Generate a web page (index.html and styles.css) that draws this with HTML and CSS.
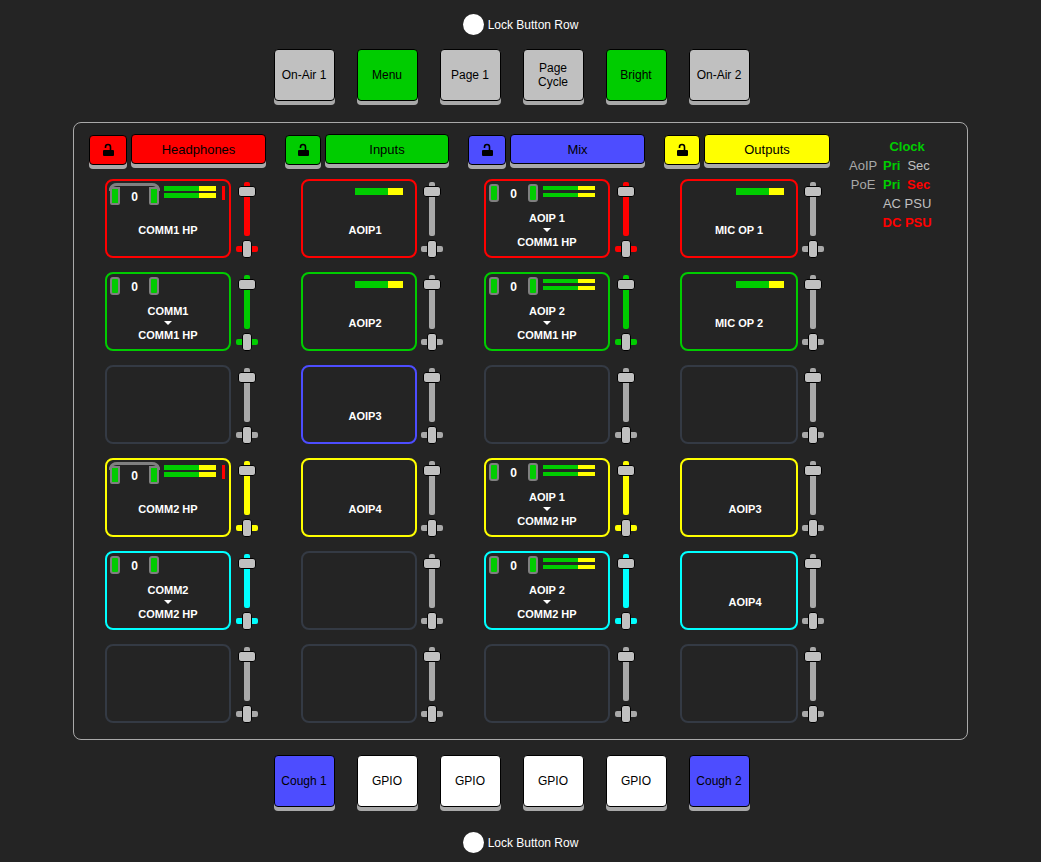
FILE: index.html
```
<!DOCTYPE html>
<html lang="en">
<head>
    <meta charset="UTF-8">
    <meta name="viewport" content="width=device-width, initial-scale=1.0">
    <title>Commentary Panel</title>
    <link rel="stylesheet" href="styles.css">
</head>
<body>
    <label class="lock-row"><input type="checkbox" class="lock-check"> Lock Button Row</label>

    <div class="button-row">
        <button class="key">On-Air 1</button>
        <button class="key green">Menu</button>
        <button class="key">Page 1</button>
        <button class="key">Page Cycle</button>
        <button class="key green">Bright</button>
        <button class="key">On-Air 2</button>
    </div>

    <main class="panel">
        <section class="column" id="headphones">
            <div class="column-head">
                <button class="lock red" aria-label="Lock headphones"><svg viewBox="0 0 12 14"><path d="M3.500 5V4a2.500 2.500 0 0 1 5 0V7" fill="none" stroke="#000" stroke-width="1.600"/><rect x="1" y="7" width="11" height="6" rx="1"/></svg></button>
                <button class="title red">Headphones</button>
            </div>
        </section>
        <section class="column narrow" id="inputs">
            <div class="column-head">
                <button class="lock green" aria-label="Lock inputs"><svg viewBox="0 0 12 14"><path d="M3.500 5V4a2.500 2.500 0 0 1 5 0V7" fill="none" stroke="#000" stroke-width="1.600"/><rect x="1" y="7" width="11" height="6" rx="1"/></svg></button>
                <button class="title green">Inputs</button>
            </div>
        </section>
        <section class="column" id="mix">
            <div class="column-head">
                <button class="lock blue" aria-label="Lock mix"><svg viewBox="0 0 12 14"><path d="M3.500 5V4a2.500 2.500 0 0 1 5 0V7" fill="none" stroke="#000" stroke-width="1.600"/><rect x="1" y="7" width="11" height="6" rx="1"/></svg></button>
                <button class="title blue">Mix</button>
            </div>
        </section>
        <section class="column narrow" id="outputs">
            <div class="column-head">
                <button class="lock yellow" aria-label="Lock outputs"><svg viewBox="0 0 12 14"><path d="M3.500 5V4a2.500 2.500 0 0 1 5 0V7" fill="none" stroke="#000" stroke-width="1.600"/><rect x="1" y="7" width="11" height="6" rx="1"/></svg></button>
                <button class="title yellow">Outputs</button>
            </div>
        </section>
        <table class="status">
            <tr><th></th><td class="ok" colspan="2">Clock</td></tr>
            <tr><th>AoIP</th><td class="ok">Pri</td><td>Sec</td></tr>
            <tr><th>PoE</th><td class="ok">Pri</td><td class="fail">Sec</td></tr>
            <tr><th></th><td colspan="2">AC PSU</td></tr>
            <tr><th></th><td class="fail" colspan="2">DC PSU</td></tr>
        </table>
    </main>

    <div class="button-row">
        <button class="key blue">Cough 1</button>
        <button class="key white">GPIO</button>
        <button class="key white">GPIO</button>
        <button class="key white">GPIO</button>
        <button class="key white">GPIO</button>
        <button class="key blue">Cough 2</button>
    </div>

    <label class="lock-row bottom"><input type="checkbox" class="lock-check"> Lock Button Row</label>

    <script>
        // color: card border, live: fader takes the card colour
        const strips = {
            headphones: [
                { color: 'red', live: true, ears: 'band', meter: 'stereo', clip: true, names: ['COMM1 HP'] },
                { color: 'green', live: true, ears: 'plain', names: ['COMM1', 'COMM1 HP'] },
                {},
                { color: 'yellow', live: true, ears: 'band', meter: 'stereo', clip: true, names: ['COMM2 HP'] },
                { color: 'cyan', live: true, ears: 'plain', names: ['COMM2', 'COMM2 HP'] },
                {}
            ],
            inputs: [
                { color: 'red', meter: 'mono', names: ['AOIP1'], shift: true },
                { color: 'green', meter: 'mono', names: ['AOIP2'], shift: true },
                { color: 'blue', names: ['AOIP3'], shift: true },
                { color: 'yellow', names: ['AOIP4'], shift: true },
                {},
                {}
            ],
            mix: [
                { color: 'red', live: true, ears: 'plain', meter: 'stereo thin', names: ['AOIP 1', 'COMM1 HP'] },
                { color: 'green', live: true, ears: 'plain', meter: 'stereo thin', names: ['AOIP 2', 'COMM1 HP'] },
                {},
                { color: 'yellow', live: true, ears: 'plain', meter: 'stereo thin', names: ['AOIP 1', 'COMM2 HP'] },
                { color: 'cyan', live: true, ears: 'plain', meter: 'stereo thin', names: ['AOIP 2', 'COMM2 HP'] },
                {}
            ],
            outputs: [
                { color: 'red', meter: 'mono', names: ['MIC OP 1'] },
                { color: 'green', meter: 'mono', names: ['MIC OP 2'] },
                {},
                { color: 'yellow', names: ['AOIP3'], shift: true },
                { color: 'cyan', names: ['AOIP4'], shift: true },
                {}
            ]
        };

        const band = '<svg class="headband" viewBox="0 0 51 8"><path d="M1.500 8V6Q3 1.500 8 1.500H43Q48 1.500 49.500 6V8" fill="none" stroke="#808080" stroke-width="3"/></svg>';

        function renderStrip(s, id, i) {
            let ears = s.ears ? `<div class="ears ${s.ears}">${s.ears === 'band' ? band : ''}<i></i><b>0</b><i></i></div>` : '';
            let meter = s.meter ? `<div class="meter ${s.meter}"><i></i>${s.meter === 'mono' ? '' : '<i></i>'}</div>` : '';
            let clip = s.clip ? '<div class="clip"></div>' : '';
            let names = (s.names || []).map(n => `<span>${n}</span>`).join('<span class="arrow"></span>');
            return `
                <div class="strip ${s.color || 'off'} ${s.live ? 'live' : ''}">
                    <div class="card">
                        <div class="card-top">${ears}${meter}${clip}</div>
                        <div class="names ${s.shift ? 'shift' : ''}">${names}</div>
                    </div>
                    <div class="controls">
                        <input type="range" class="fader" min="0" max="100" value="90" aria-label="${id} ${i + 1} level">
                        <input type="range" class="pan" min="0" max="100" value="50" aria-label="${id} ${i + 1} pan">
                    </div>
                </div>`;
        }

        for (let id in strips) {
            document.getElementById(id).insertAdjacentHTML('beforeend',
                strips[id].map((s, i) => renderStrip(s, id, i)).join(''));
        }
    </script>
</body>
</html>
```
FILE: styles.css
```
* {
    box-sizing: border-box;
}
body {
    margin: 0;
    padding: 14px 0 9px;
    background: #242424;
    color: #fff;
    font-family: "Liberation Sans", Arial, sans-serif;
    font-size: 12px;
}
button {
    font-family: inherit;
    color: #000;
    border: 1px solid #000;
    border-radius: 4px;
    box-shadow: 0 4px 0 #a9a9a9;
    cursor: pointer;
}

/* lock rows */
.lock-row {
    display: flex;
    justify-content: center;
    align-items: center;
    gap: 4px;
    height: 21px;
}
.lock-row.bottom {
    margin-top: 25px;
}
.lock-check {
    appearance: none;
    width: 21px;
    height: 21px;
    margin: 0;
    border-radius: 50%;
    background: #fff;
}
.lock-check:checked {
    background: #00cc00;
}

/* button rows */
.button-row {
    display: flex;
    justify-content: center;
    gap: 22px;
    margin-top: 14px;
    padding-right: 18px;
}
.key {
    width: 61px;
    height: 52px;
    padding: 0 4px;
    font-size: 12px;
    line-height: 14px;
    background: #c0c0c0;
}
button.red { background: #ff0000; }
button.green { background: #00cc00; }
button.blue { background: #4d4dff; }
button.yellow { background: #ffff00; }
button.white { background: #fff; }

/* main panel */
.panel {
    display: grid;
    grid-template-columns: 177fr 164fr 177fr 166fr 84px;
    column-gap: 19px;
    align-items: start;
    margin: 21px 73px 0;
    padding: 11px 34px 16px 15px;
    border: 1px solid #a9a9a9;
    border-radius: 8px;
}
.panel + .button-row {
    margin-top: 15px;
}
.column {
    display: flex;
    flex-direction: column;
    gap: 14px;
}
.column-head {
    display: flex;
    gap: 4px;
    height: 31px;
}
.lock {
    width: 38px;
    height: 30px;
    margin-top: 1px;
    padding: 0;
}
.narrow .lock {
    width: 36px;
}
.lock svg {
    display: block;
    width: 12px;
    height: 14px;
    margin: 0 auto;
}
.title {
    flex: 1;
    height: 30px;
    font-size: 13px;
}

/* strips */
.strip {
    --color: #343a44;
    --track: #a9a9a9;
    display: flex;
    gap: 5px;
    padding: 0 8px 0 16px;
}
.narrow .strip {
    gap: 4px;
    padding-right: 6px;
}
.strip.red { --color: #ff0000; }
.strip.green { --color: #00cc00; }
.strip.blue { --color: #4d4dff; }
.strip.yellow { --color: #ffff00; }
.strip.cyan { --color: #00ffff; }
.strip.live { --track: var(--color); }

.card {
    flex: 1;
    height: 79px;
    border: 2px solid var(--color);
    border-radius: 8px;
}
.card-top {
    display: flex;
    height: 31px;
    padding-left: 3px;
}
.ears {
    display: flex;
    justify-content: space-between;
    position: relative;
    width: 49px;
    height: 18px;
    margin: 3px 5px 0 0;
    line-height: 21px;
}
.ears i {
    width: 10px;
    height: 18px;
    background: #00cc00;
    border: 2px solid #808080;
    border-radius: 3px;
}
.ears.band {
    margin-top: 6px;
}
.ears.band i {
    border-radius: 0 0 2px 2px;
}
.headband {
    position: absolute;
    top: -4px;
    left: -1px;
    width: 51px;
    height: 8px;
}
.meter {
    display: flex;
    flex-direction: column;
    gap: 2px;
    width: 52px;
    margin-top: 5px;
}
.meter i {
    height: 5px;
    background: linear-gradient(to right, #00cc00 68%, #ffff00 68%);
}
.meter.thin {
    gap: 3px;
}
.meter.thin i {
    height: 4px;
}
.meter.mono {
    width: 48px;
    margin: 7px 12px 0 auto;
}
.meter.mono i {
    height: 7px;
}
.clip {
    width: 3px;
    height: 14px;
    margin: 5px 0 0 6px;
    background: #ff0000;
}
.names {
    display: flex;
    flex-direction: column;
    align-items: center;
    justify-content: center;
    height: 36px;
    font-size: 11px;
    font-weight: bold;
    line-height: 12px;
}
.names.shift {
    padding-left: 12px;
}
.names .arrow {
    margin: 4px 0;
    border: 4px solid transparent;
    border-top-color: #fff;
    border-bottom: 0;
}

/* faders */
.controls {
    display: flex;
    flex-direction: column;
    align-items: center;
    width: 22px;
    padding-top: 3px;
}
.fader,
.pan {
    appearance: none;
    margin: 0;
    background: none;
}
.fader {
    writing-mode: vertical-lr;
    direction: rtl;
    width: 18px;
    height: 54px;
}
.fader::-webkit-slider-runnable-track {
    width: 6px;
    height: 54px;
    background: var(--track);
    border-radius: 2px;
}
.fader::-webkit-slider-thumb {
    appearance: none;
    width: 18px;
    height: 11px;
    margin-left: -6px;
    background: #c0c0c0;
    border: 1px solid #000;
    border-radius: 3px;
}
.pan {
    width: 22px;
    height: 18px;
    margin-top: 4px;
}
.pan::-webkit-slider-runnable-track {
    height: 6px;
    background: var(--track);
    border-radius: 2px;
}
.pan::-webkit-slider-thumb {
    appearance: none;
    width: 10px;
    height: 18px;
    margin-top: -6px;
    background: #c0c0c0;
    border: 1px solid #000;
    border-radius: 3px;
}

/* status */
.status {
    width: 84px;
    margin-top: 3px;
    border-collapse: collapse;
    font-size: 13px;
    line-height: 19px;
    text-align: center;
    color: #c0c0c0;
}
.status th,
.status td {
    height: 19px;
    padding: 0;
    white-space: nowrap;
}
.status th {
    width: 32px;
    padding-right: 4px;
    font-weight: normal;
    color: #a9a9a9;
}
.status td + td {
    padding-left: 2px;
}
.status .ok {
    font-weight: bold;
    color: #00cc00;
}
.status .fail {
    font-weight: bold;
    color: #ff0000;
}
```
